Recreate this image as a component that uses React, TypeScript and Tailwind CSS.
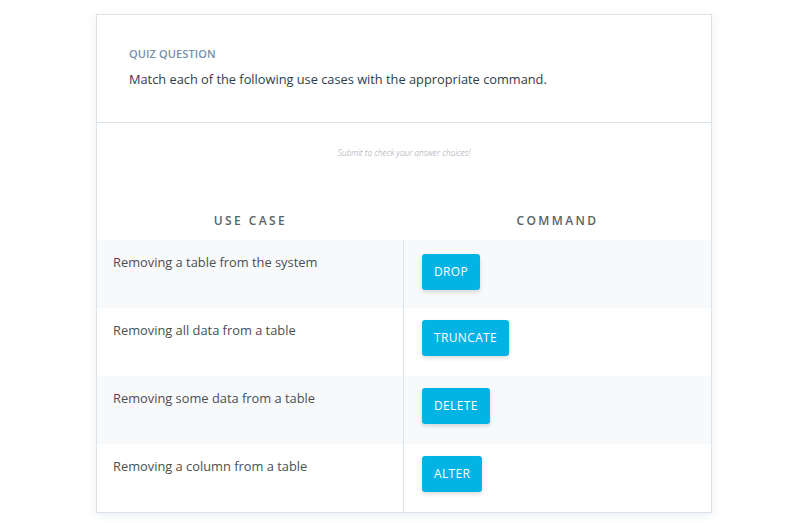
const rows = [
  { useCase: "Removing a table from the system", command: "DROP" },
  { useCase: "Removing all data from a table", command: "TRUNCATE" },
  { useCase: "Removing some data from a table", command: "DELETE" },
  { useCase: "Removing a column from a table", command: "ALTER" },
];

export default function App() {
  return (
    <div className="min-h-[523px] bg-white pt-[14px] font-['Open_Sans',sans-serif]">
      <div className="ml-[96px] w-[616px] border border-[#dbe2ea] bg-white shadow-[0_2px_10px_rgba(30,50,80,0.08)]">
        <div className="border-b border-[#dbe2ea] px-[32px] pt-[31px] pb-[33px]">
          <p className="text-[11px] leading-4 font-semibold uppercase tracking-[0.01em] text-[#7590ab]">
            Quiz Question
          </p>
          <p className="mt-[7px] text-[12.8px] leading-5 text-[#2e3d49]">
            Match each of the following use cases with the appropriate command.
          </p>
        </div>
        <div className="pt-[24px]">
          <p className="text-center text-[8.25px] leading-3 font-light italic text-[#98a1aa]">
            Submit to check your answer choices!
          </p>
          <div className="mt-[54px] mb-[11px] grid grid-cols-2">
            <p className="text-center text-[12px] leading-4 font-semibold tracking-[0.2em] text-[#58626b]">
              USE CASE
            </p>
            <p className="text-center text-[12px] leading-4 font-semibold tracking-[0.2em] text-[#58626b]">
              COMMAND
            </p>
          </div>
          {rows.map((row, i) => (
            <div
              key={row.command}
              className={`grid h-[68px] grid-cols-2 ${i % 2 === 0 ? "bg-[#f8f9fb]" : "bg-white"}`}
            >
              <div className="border-r border-[#dde3ea] pl-[16px] pt-[12px] text-[12.85px] leading-5 text-[#4a4f55]">
                {row.useCase}
              </div>
              <div className={`pl-[18px] ${i === 0 ? "pt-[14px]" : "pt-[12px]"}`}>
                <span className="inline-flex h-[36px] items-center rounded-[3px] bg-[#02b3e4] px-[12px] text-[12px] tracking-[0.03em] text-white shadow-[0_2px_4px_rgba(0,0,0,0.15)]">
                  {row.command}
                </span>
              </div>
            </div>
          ))}
        </div>
      </div>
    </div>
  );
}
